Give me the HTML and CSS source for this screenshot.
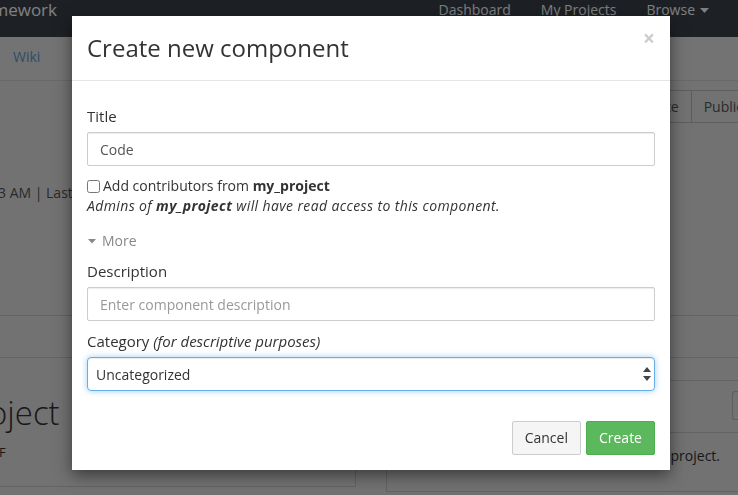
FILE: index.html
```html
<!DOCTYPE html>
<html lang="en">
<head>
<meta charset="utf-8">
<title>Create new component</title>
<link rel="stylesheet" href="styles.css">
</head>
<body>
<div class="page">
  <header class="navbar">
    <div class="brand"><span>Open Science Framework</span></div>
    <nav class="nav-right">
      <a class="nav-link">Dashboard</a>
      <a class="nav-link">My Projects</a>
      <a class="nav-link">Browse <svg class="nav-caret" width="9" height="5" viewBox="0 0 9 5"><path d="M0 0h9L4.5 5z" fill="currentColor"/></svg></a>
    </nav>
  </header>
  <div class="subnav"><a class="subnav-link">Wiki</a></div>
  <main class="main">
    <div class="toolbar">
      <div class="btn-group">
        <span class="group-btn">Make Private</span>
        <span class="group-btn">Public</span>
      </div>
    </div>
    <p class="dates">3 AM | Last Updated: 2015-03-04 10:23 AM</p>
    <div class="band"></div>
    <div class="panels">
      <section class="panel-left">
        <h1 class="project-title">oject</h1>
        <p class="project-meta">F</p>
      </section>
      <section class="panel-right">
        <div class="panel-heading"><span class="search-box"></span></div>
        <p class="panel-text">Add components to organize your project.</p>
      </section>
    </div>
  </main>
</div>

<div class="backdrop"></div>

<div class="modal">
  <div class="modal-header">
    <span class="close">&times;</span>
    <h3 class="modal-title">Create new component</h3>
  </div>
  <div class="modal-body">
    <div class="form-group">
      <label class="control-label">Title</label>
      <input class="form-control" type="text" value="Code">
    </div>
    <div class="checkbox">
      <label class="check-label"><input class="check" type="checkbox">Add contributors from <b>my_project</b></label>
      <div class="help"><i>Admins of <b>my_project</b> will have read access to this component.</i></div>
    </div>
    <div class="more">
      <svg class="more-caret" width="8" height="5" viewBox="0 0 8 5"><path d="M0 0h8L4 4.5z" fill="currentColor"/></svg>
      <span>More</span>
    </div>
    <div class="form-group">
      <label class="control-label">Description</label>
      <input class="form-control" type="text" placeholder="Enter component description">
    </div>
    <div class="form-group last">
      <label class="control-label">Category <i>(for descriptive purposes)</i></label>
      <div class="select-wrap">
        <select class="form-select">
          <option>Uncategorized</option>
        </select>
        <svg class="select-arrows" width="8" height="14" viewBox="0 0 8 14"><path d="M4 0L8 5H0z M0 9h8L4 14z" fill="currentColor"/></svg>
      </div>
    </div>
  </div>
  <div class="modal-footer">
    <button class="btn btn-default">Cancel</button>
    <button class="btn btn-success">Create</button>
  </div>
</div>
</body>
</html>
```

FILE: styles.css
```css
* { box-sizing: border-box; }

html, body {
  margin: 0;
  height: 495px;
  overflow: hidden;
}

body {
  font-family: "Open Sans", "DejaVu Sans", sans-serif;
  font-size: 14px;
  line-height: 20px;
  color: #333;
  background: #e4e4e4;
}

/* ---------- background page ---------- */
.page {
  width: 100%;
}

.navbar {
  height: 37px;
  background: #3a424a;
  display: flex;
  justify-content: space-between;
  color: #ffffff;
}

.brand {
  width: 57px;
  overflow: hidden;
  display: flex;
  justify-content: flex-end;
  white-space: nowrap;
  font-size: 17px;
  line-height: 20px;
}

.nav-right {
  display: flex;
  padding-right: 14px;
}

.nav-link {
  padding: 0 15px;
  line-height: 20px;
  white-space: nowrap;
  display: flex;
  align-items: center;
  height: 20px;
}

.nav-caret {
  margin-left: 5px;
}

.subnav {
  height: 44px;
  padding: 10px 13px;
  background: #e6e6e6;
  border-bottom: 1px solid #d2d2d2;
}

.subnav-link {
  color: #5a9bd5;
}

.main {
  padding-top: 9px;
}

.toolbar {
  display: flex;
  justify-content: flex-end;
  margin-right: -18px;
}

.btn-group {
  display: flex;
  border: 1px solid #bdbdbd;
  border-radius: 3px;
  height: 33px;
}

.group-btn {
  padding: 6px 12px;
  color: #555;
}

.group-btn + .group-btn {
  border-left: 1px solid #bdbdbd;
}

.dates {
  margin: 60px 0 0 -2px;
  width: 74px;
  overflow: hidden;
  color: #555;
  white-space: nowrap;
}

.band {
  margin-top: 112px;
  height: 43px;
  border-top: 1px solid #c6c6c6;
  border-bottom: 1px solid #c6c6c6;
}

.panels {
  display: grid;
  grid-template-columns: 357px 1fr;
  column-gap: 30px;
  margin-left: -1px;
  margin-right: -22px;
  align-items: start;
}

.panel-left {
  height: 129px;
  border: 1px solid #c6c6c6;
  border-top: none;
  overflow: hidden;
}

.project-title {
  margin: 36px 0 0 -12px;
  font-size: 33px;
  line-height: 37px;
  font-weight: 300;
  color: #333;
  white-space: nowrap;
}

.project-meta {
  margin: 11px 0 0 -1px;
  font-size: 13px;
  color: #333;
}

.panel-right {
  margin-top: 22px;
  height: 112px;
  border: 1px solid #c6c6c6;
}

.panel-heading {
  height: 52px;
  border-bottom: 1px solid #c6c6c6;
  display: flex;
  justify-content: flex-end;
  align-items: flex-start;
  padding-top: 10px;
}

.search-box {
  width: 27px;
  height: 29px;
  border: 1px solid #bdbdbd;
  border-radius: 3px 0 0 3px;
  border-right: none;
}

.panel-text {
  margin: 0;
  padding: 13px 39px 0 0;
  text-align: right;
  white-space: nowrap;
  color: #333;
}

/* ---------- backdrop + modal ---------- */
.backdrop {
  position: fixed;
  inset: 0;
  background: rgba(0, 0, 0, 0.5);
}

.modal {
  position: absolute;
  top: 16px;
  left: 72px;
  width: 598px;
  background: #fff;
  box-shadow: 0 5px 15px rgba(0, 0, 0, 0.5);
}

.modal-header {
  padding: 15px;
  border-bottom: 1px solid #e5e5e5;
}

.modal-title {
  margin: 0;
  font-size: 24px;
  line-height: 34px;
  font-weight: 400;
  color: #333;
}

.close {
  float: right;
  margin-top: -3px;
  margin-right: 0;
  font-size: 21px;
  font-weight: 700;
  line-height: 1;
  color: #000;
  opacity: 0.2;
}

.modal-body {
  padding: 25px 15px 15px;
}

.form-group {
  margin-bottom: 10px;
}

.form-group.last {
  margin-bottom: 0;
}

.control-label {
  display: block;
  margin-bottom: 6px;
  font-size: 15px;
  font-weight: 400;
}

.form-control {
  display: block;
  width: 100%;
  height: 34px;
  padding: 6px 12px;
  border: 1px solid #ccc;
  border-radius: 2px;
  font-family: inherit;
  font-size: 14px;
  color: #555;
  background: #fff;
  box-shadow: inset 0 1px 1px rgba(0, 0, 0, 0.075);
}

.form-control::placeholder {
  color: #999;
}

.checkbox {
  margin-bottom: 15px;
}

.check-label {
  display: block;
  white-space: nowrap;
}

.check {
  width: 13px;
  height: 13px;
  margin: 0 3px 0 0;
  vertical-align: -2px;
}

.help {
  color: #333;
  letter-spacing: 0.38px;
}

.more {
  display: flex;
  align-items: center;
  gap: 6px;
  color: #888;
  margin-bottom: 10px;
  margin-left: 1px;
}

.select-wrap {
  position: relative;
}

.form-select {
  display: block;
  width: 100%;
  height: 34px;
  padding: 6px 8px;
  border: 1px solid #66afe9;
  border-radius: 4px;
  font-family: inherit;
  font-size: 14px;
  color: #333;
  background: #fff;
  appearance: none;
  -webkit-appearance: none;
  box-shadow: inset 0 1px 1px rgba(0, 0, 0, 0.075), 0 0 6px rgba(102, 175, 233, 0.6);
  outline: none;
}

.select-arrows {
  position: absolute;
  right: 4px;
  top: 10px;
  color: #444;
}

.modal-footer {
  padding: 15px;
  display: flex;
  justify-content: flex-end;
  gap: 5px;
}

.btn {
  height: 34px;
  padding: 6px 12px;
  font-family: inherit;
  font-size: 14px;
  line-height: 20px;
  border: 1px solid transparent;
  border-radius: 2px;
}

.btn-default {
  color: #333;
  background: #f5f5f5;
  border-color: #ccc;
}

.btn-success {
  color: #fff;
  background: #5cb85c;
  border-color: #4cae4c;
}
```
